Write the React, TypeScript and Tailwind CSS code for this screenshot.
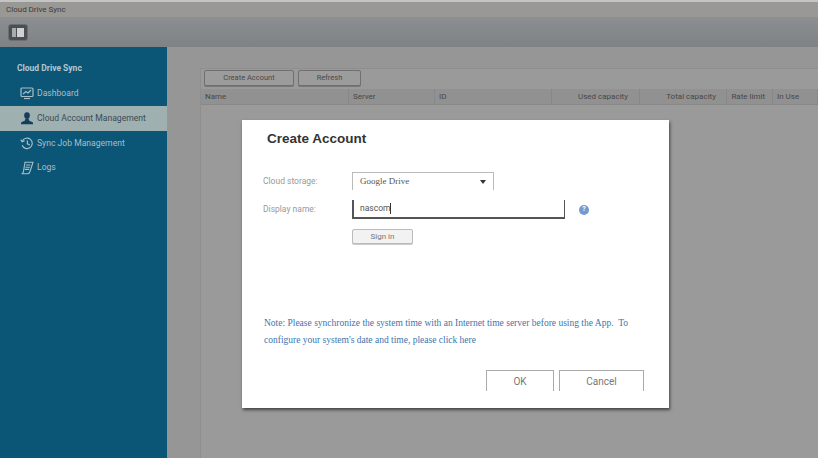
const cols = [
  { t: "Name", w: "w-[148px]", a: "text-left pl-[4px]" },
  { t: "Server", w: "w-[86px]", a: "text-left pl-[4px]" },
  { t: "ID", w: "w-[117px]", a: "text-left pl-[4px]" },
  { t: "Used capacity", w: "w-[88px]", a: "text-right pr-[11px]" },
  { t: "Total capacity", w: "w-[87px]", a: "text-right pr-[10px]" },
  { t: "Rate limit", w: "w-[46px]", a: "text-right pr-[7px]" },
  { t: "In Use", w: "flex-1", a: "text-left pl-[4px]" },
];

function DashIcon() {
  return (
    <svg width="14" height="13" viewBox="0 0 14 13" fill="none" stroke="currentColor" strokeWidth="1.2">
      <rect x="1" y="1" width="12" height="8.5" rx="1" />
      <path d="M3 7 L6 4.5 L8 6 L11 3" />
      <path d="M4 11.5 H10" />
    </svg>
  );
}
function UserIcon() {
  return (
    <svg width="14" height="13" viewBox="0 0 14 13" fill="#123f5c">
      <ellipse cx="7" cy="3.6" rx="2.8" ry="3.3" />
      <path d="M5.4 6.5 H8.6 L9 8.6 L13 10.6 V12.2 H1 V10.6 L5 8.6 Z" />
    </svg>
  );
}
function HistoryIcon() {
  return (
    <svg width="14" height="13" viewBox="0 0 14 13" fill="none" stroke="currentColor" strokeWidth="1.2">
      <path d="M2.4 4 A5.2 5.2 0 1 1 2.2 8.2" />
      <path d="M0.8 2.6 L2.2 4.8 L4.6 3.8" />
      <path d="M7.4 3.4 V6.8 L9.8 8" />
    </svg>
  );
}
function LogsIcon() {
  return (
    <svg width="14" height="14" viewBox="0 0 14 14" fill="none" stroke="currentColor" strokeWidth="1.1">
      <path d="M5 1.2 H13 L10 10.5 C9.6 12 8.6 12.8 7.4 12.8 H1.6 C2.8 12.6 3.2 11.8 3.4 10.8 Z" />
      <path d="M6 4 H10.4 M5.4 6.2 H9.8 M4.8 8.4 H9.2" />
    </svg>
  );
}

const nav = [
  { t: "Dashboard", I: DashIcon },
  { t: "Cloud Account Management", I: UserIcon, active: true },
  { t: "Sync Job Management", I: HistoryIcon },
  { t: "Logs", I: LogsIcon },
];

export default function App() {
  return (
    <div className="relative w-[818px] h-[458px] overflow-hidden flex flex-col bg-[#969696] font-['Roboto',sans-serif]">
      <div className="h-[17px] shrink-0 bg-[#9a9894] border-t-2 border-[#c4c4c4] flex items-center pl-[6px] text-[8px] text-[#3b3b3b]">
        Cloud Drive Sync
      </div>
      <div className="h-[30px] shrink-0 bg-gradient-to-b from-[#8b8f92] to-[#7f8285] flex items-center pl-[8px]">
        <div className="w-[20px] h-[17px] rounded-[3px] bg-[#4b4f53] border border-[#6c6f72] flex items-center justify-center">
          <div className="w-[12px] h-[9px] flex gap-px">
            <div className="w-[4px] bg-[#a9abad]" />
            <div className="flex-1 bg-[#d0d1d2]" />
          </div>
        </div>
      </div>
      <div className="flex-1 flex min-h-0">
        <aside className="w-[167px] shrink-0 bg-[#0b5676] flex flex-col pt-[15px] text-[8.6px] text-[#aabec7]">
          <div className="pl-[17px] h-[12px] flex items-center font-bold text-[8.5px] text-[#b4c8d0]">Cloud Drive Sync</div>
          <div className="mt-[7.5px] flex flex-col">
            {nav.map(({ t, I, active }) => (
              <div
                key={t}
                className={`h-[24.7px] flex items-center pl-[20px] gap-[3px] ${active ? "bg-[#9fb0b0] text-[#3c4a55]" : ""}`}
              >
                <I />
                <span>{t}</span>
              </div>
            ))}
          </div>
        </aside>
        <main className="flex-1 pt-[21px] pl-[33px] flex flex-col">
          <div className="flex-1 bg-[#9a9a9a] border-l border-t border-[#8e8e8e] flex flex-col">
            <div className="h-[20px] pl-[3px] pb-[2px] flex items-center gap-[4px] text-[7.5px] text-[#4a4a4a]">
              <button className="h-[16px] w-[90px] rounded-[2px] bg-[#9c9c9c] border border-[#6f6f6f] shadow-[0_1px_0_#777]">Create Account</button>
              <button className="h-[16px] w-[63px] rounded-[2px] bg-[#9c9c9c] border border-[#6f6f6f] shadow-[0_1px_0_#777]">Refresh</button>
            </div>
            <div className="h-[16px] flex items-center bg-[#919191] border-b border-[#888888] text-[8px] text-[#474747]">
              {cols.map((c) => (
                <div key={c.t} className={`${c.w} ${c.a} h-full leading-[15px] border-r border-[#888888] shrink-0 whitespace-nowrap`}>
                  {c.t}
                </div>
              ))}
            </div>
          </div>
        </main>
      </div>

      <div className="absolute left-[242px] top-[120px] w-[427px] h-[288px] bg-white shadow-[1px_2px_3px_#444] flex flex-col pl-[25px]">
        <h1 className="mt-[10px] h-[17px] leading-[17px] text-[13.5px] font-bold text-[#333] font-['Liberation_Sans',sans-serif]">Create Account</h1>
        <div className="mt-[25px] flex items-center h-[18px] text-[8.5px]">
          <label className="w-[86px] -ml-[4px] mr-[3px] text-[#999]">Cloud storage:</label>
          <div className="w-[142px] h-[18px] border-t border-x border-[#bbb] flex items-center justify-between px-[7px] text-[#555] text-[9px] font-['Liberation_Serif',serif]">
            <span>Google Drive</span>
            <span className="w-0 h-0 border-x-[3px] border-x-transparent border-t-[4px] border-t-[#333]" />
          </div>
        </div>
        <div className="mt-[10px] flex items-center h-[19px] text-[8.5px]">
          <label className="w-[86px] -ml-[4px] mr-[3px] text-[#999]">Display name:</label>
          <div className="w-[213px] h-[19px] border-l-2 border-b-2 border-r border-[#555] flex items-center pl-[6px] text-[#555]">
            nascom<span className="w-px h-[11px] bg-[#333]" />
          </div>
          <span className="ml-[14px] w-[10px] h-[10px] rounded-full bg-[#6f9bd0] text-white text-[7px] font-bold flex items-center justify-center">?</span>
        </div>
        <button className="mt-[10px] ml-[85px] w-[61px] h-[15px] rounded-[2px] border border-[#bbb] bg-[#f2f2f2] text-[8px] text-[#777] shadow-[0_1px_0_#ccc]">Sign in</button>
        <p className="mt-[71px] -ml-[3px] text-[9.5px] leading-[17px] whitespace-nowrap text-[#3c74ae] font-['Liberation_Serif',serif]">
          Note: Please synchronize the system time with an Internet time server before using the App.&nbsp; To
          <br />
          configure your system's date and time, please click here
        </p>
        <div className="mt-[21px] flex justify-end gap-[5px] pr-[25px] text-[10px] text-[#777]">
          <div className="w-[68px] h-[21px] border-t border-x border-[#aaa] flex items-center justify-center">OK</div>
          <div className="w-[85px] h-[21px] border-t border-x border-[#aaa] flex items-center justify-center">Cancel</div>
        </div>
      </div>
    </div>
  );
}
